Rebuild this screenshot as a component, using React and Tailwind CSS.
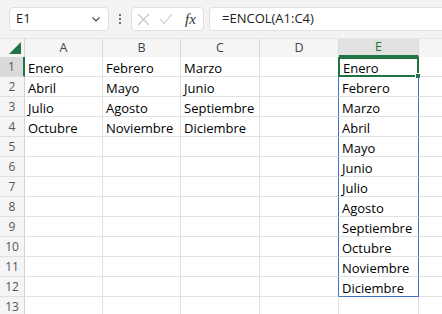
import React from "react";

const cols = ["A", "B", "C", "D", "E"];
const widths = ["w-[78px]", "w-[78px]", "w-[79px]", "w-[79px]", "w-[80px]"];

const data = [
  ["Enero", "Febrero", "Marzo"],
  ["Abril", "Mayo", "Junio"],
  ["Julio", "Agosto", "Septiembre"],
  ["Octubre", "Noviembre", "Diciembre"],
];

const months = [
  "Enero", "Febrero", "Marzo", "Abril", "Mayo", "Junio",
  "Julio", "Agosto", "Septiembre", "Octubre", "Noviembre", "Diciembre",
];

const Toolbar = () => (
  <div className="h-[38px] bg-[#f3f3f3] flex items-center pl-[9px]">
    <div className="w-[100px] h-[24px] bg-white border border-[#e0e0e0] rounded-[4px] flex items-center justify-between pl-[6px] pr-[6px] text-[13px] text-[#222]">
      <span>E1</span>
      <svg width="12" height="12" viewBox="0 0 12 12" fill="none" stroke="#444" strokeWidth="1.2">
        <path d="M2.5 4.5 L6 8 L9.5 4.5" />
      </svg>
    </div>
    <div className="w-[22px] flex flex-col items-center gap-[2px]">
      <span className="w-[2px] h-[2px] bg-[#444] rounded-full" />
      <span className="w-[2px] h-[2px] bg-[#444] rounded-full" />
      <span className="w-[2px] h-[2px] bg-[#444] rounded-full" />
    </div>
    <div className="w-[73px] h-[24px] bg-white border border-[#e0e0e0] rounded-[4px] flex items-center pl-[5px] gap-[9px]">
      <svg width="13" height="13" viewBox="0 0 13 13" stroke="#c4c4c4" strokeWidth="1.1">
        <path d="M1 1 L12 12 M12 1 L1 12" />
      </svg>
      <svg width="14" height="12" viewBox="0 0 14 12" fill="none" stroke="#c4c4c4" strokeWidth="1.1">
        <path d="M1 6 L5 10.5 L13 1" />
      </svg>
      <span className="text-[15px] italic text-[#333] leading-none ml-[3px]" style={{ fontFamily: '"Liberation Serif", serif' }}>
        fx
      </span>
    </div>
    <div className="flex-1 h-[24px] bg-white border border-[#e0e0e0] border-r-0 rounded-l-[4px] ml-[5px] flex items-center pl-[12px] text-[13px] text-[#222]">
      =ENCOL(A1:C4)
    </div>
  </div>
);

export default function App() {
  return (
    <div
      className="w-[442px] h-[314px] overflow-hidden bg-white"
      style={{ fontFamily: '"Open Sans", "Noto Sans", sans-serif' }}
    >
      <Toolbar />
      <div className="flex h-[19px] bg-[#f5f5f5] border-t border-[#e6e6e6]">
        <div className="w-[25px] shrink-0 relative border-r border-[#d4d4d4]">
          <svg className="absolute right-[3px] bottom-[3px]" width="12" height="12" viewBox="0 0 12 12">
            <path d="M12 0 L12 12 L0 12 Z" fill="#217346" />
          </svg>
        </div>
        {cols.map((c, i) => (
          <div
            key={c}
            className={`${widths[i]} shrink-0 flex items-center justify-center text-[12.5px] border-r border-[#dadada] ${
              c === "E" ? "bg-[#e2e2e2] text-[#217346] border-b-2 border-b-[#217346]" : "text-[#444]"
            }`}
          >
            {c}
          </div>
        ))}
        <div className="flex-1" />
      </div>
      {Array.from({ length: 13 }).map((_, r) => (
        <div key={r} className="flex h-[20px]">
          <div
            className={`w-[25px] shrink-0 flex items-center justify-center pt-[1px] text-[12px] text-[#555] border-b border-[#e0e0e0] ${
              r === 0 ? "bg-[#dadada] border-r-2 border-r-[#217346]" : "bg-[#f5f5f5] border-r border-r-[#d4d4d4]"
            }`}
          >
            {r + 1}
          </div>
          {cols.map((c, i) => {
            const isE = c === "E";
            const inSpill = isE && r < 12;
            let txt = "";
            if (i < 3 && data[r]) txt = data[r][i];
            if (inSpill) txt = months[r];
            let cls = "border-r border-b border-[#e1e1e1]";
            if (c === "D" && r < 12) {
              cls = "border-b border-b-[#e1e1e1] border-r border-r-[#4472c4]";
            }
            if (inSpill) {
              cls =
                "border-r border-r-[#4472c4] border-b " +
                (r === 11 ? "border-b-[#4472c4]" : "border-b-[#e1e1e1]");
            }
            if (isE && r === 0) {
              cls = "border-2 border-[#217346] ml-[-1px] w-[81px]";
            }
            return (
              <div
                key={c}
                className={`${widths[i]} shrink-0 relative flex items-center pl-[3px] pt-[3px] text-[13px] text-black leading-none whitespace-nowrap ${cls}`}
              >
                {txt}
                {isE && r === 0 && (
                  <span className="absolute right-[-4px] bottom-[-4px] w-[6px] h-[6px] bg-[#217346] border border-white" />
                )}
              </div>
            );
          })}
          <div className="flex-1 border-b border-[#e1e1e1]" />
        </div>
      ))}
    </div>
  );
}
